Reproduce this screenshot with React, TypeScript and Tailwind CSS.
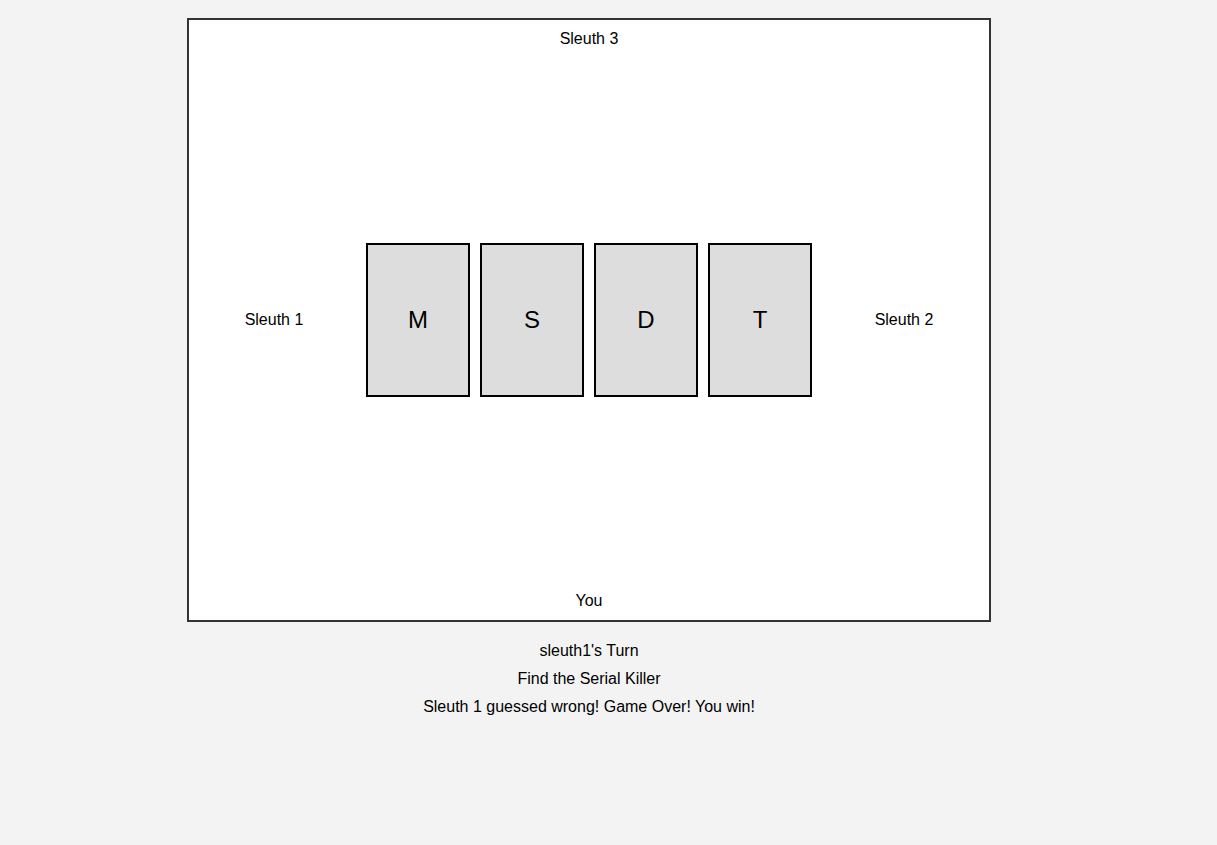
import React from "react";

const cards = ["M", "S", "D", "T"];

export default function App() {
  return (
    <div
      className="min-h-screen w-full bg-[#f3f3f3] text-black"
      style={{ fontFamily: '"Liberation Sans", Arial, sans-serif' }}
    >
      <div className="ml-[187px] w-[804px] pt-[18px]">
        <div className="flex h-[604px] w-[804px] flex-col justify-between border-2 border-[#333] bg-white py-[10px] text-[16px] leading-[18px]">
          <div className="text-center">Sleuth 3</div>
          <div className="flex items-center">
            <div className="w-[170px] text-center">Sleuth 1</div>
            <div className="flex flex-1 justify-center gap-[10px]">
              {cards.map((c) => (
                <div
                  key={c}
                  className="flex h-[154px] w-[104px] items-center justify-center border-2 border-black bg-[#ddd] text-[24px]"
                >
                  {c}
                </div>
              ))}
            </div>
            <div className="w-[170px] text-center">Sleuth 2</div>
          </div>
          <div className="text-center">You</div>
        </div>
        <div className="mt-[15px] text-center text-[16px] leading-[28px]">
          <div>sleuth1's Turn</div>
          <div>Find the Serial Killer</div>
          <div>Sleuth 1 guessed wrong! Game Over! You win!</div>
        </div>
      </div>
    </div>
  );
}
